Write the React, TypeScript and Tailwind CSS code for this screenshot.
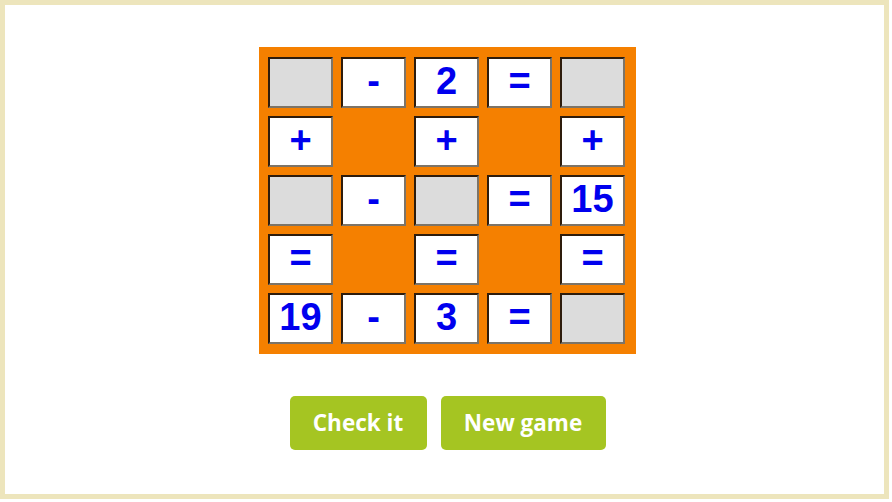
import React from 'react';

type Cell = { kind: 'blank' | 'input' | 'text'; value?: string };

const t = (value: string): Cell => ({ kind: 'text', value });
const input: Cell = { kind: 'input' };
const blank: Cell = { kind: 'blank' };

// 5x5 puzzle board: numbers, operators and empty inputs to fill in
const board: Cell[][] = [
    [input, t('-'), t('2'), t('='), input],
    [t('+'), blank, t('+'), blank, t('+')],
    [input, t('-'), input, t('='), t('15')],
    [t('='), blank, t('='), blank, t('=')],
    [t('19'), t('-'), t('3'), t('='), input],
];

const BoardCell: React.FC<{ cell: Cell }> = ({ cell }) => {
    if (cell.kind === 'blank') return <div className="h-[51px] w-[65px]" />;
    const bg = cell.kind === 'input' ? 'bg-[#dcdcdc]' : 'bg-white';
    return (
        <div
            className={`flex h-[51px] w-[65px] items-center justify-center border-2 border-t-[#2e1c0c] border-l-[#2e1c0c] border-b-[#7c7468] border-r-[#7c7468] pb-[3px] ${bg}`}
        >
            {cell.value && (
                <span className="text-[38px] font-bold leading-none text-[#0000ee] [font-family:'Liberation_Sans',Arial,sans-serif]">
                    {cell.value}
                </span>
            )}
        </div>
    );
};

export default function App() {
    return (
        <div className="h-[502px] w-[892px] bg-white">
            <div className="flex h-[499px] w-[889px] flex-col items-center border-[5px] border-[#ede5bc] pt-[42px]">
                <div className="ml-[6px] grid grid-cols-[repeat(5,65px)] gap-[8px] bg-[#f58000] pb-[10px] pl-[9px] pr-[11px] pt-[10px]">
                    {board.flat().map((cell, i) => (
                        <BoardCell key={i} cell={cell} />
                    ))}
                </div>

                <div className="ml-[6px] mt-[42px] flex gap-[14px]">
                    <button className="h-[54px] w-[137px] rounded-[5px] bg-[#a5c522] pb-[1px] text-[22.5px] font-bold text-white [font-family:'Open_Sans',sans-serif]">
                        Check it
                    </button>
                    <button className="h-[54px] w-[165px] rounded-[5px] bg-[#a5c522] pb-[1px] text-[22.5px] font-bold text-white [font-family:'Open_Sans',sans-serif]">
                        New game
                    </button>
                </div>
            </div>
        </div>
    );
}
